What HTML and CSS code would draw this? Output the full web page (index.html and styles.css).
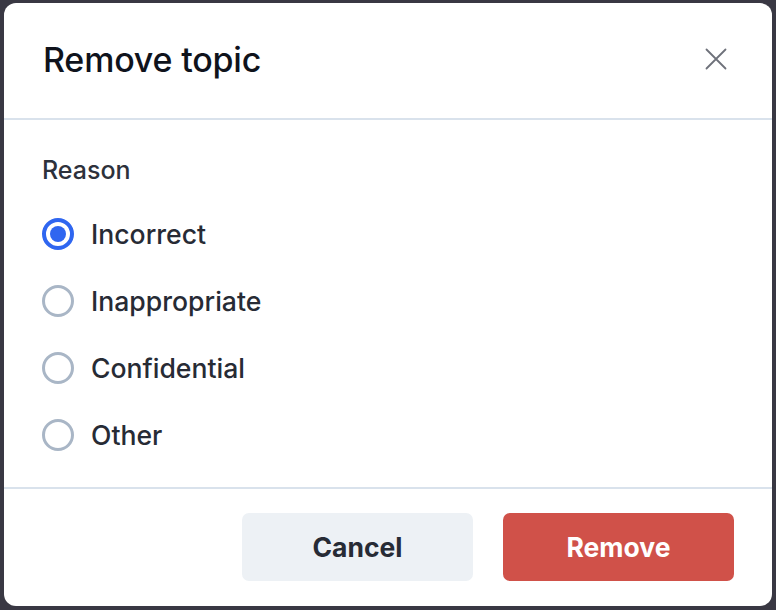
FILE: index.html
```html
<!DOCTYPE html>
<html>
<head>
<meta charset="utf-8">
<link rel="stylesheet" href="styles.css">
</head>
<body>
<div class="dialog">
  <div class="header">
    <h1 class="title">Remove topic</h1>
    <button class="close" aria-label="Close">
      <svg width="22" height="22" viewBox="0 0 22 22"><path d="M1.5 1.5 L20.5 20.5 M20.5 1.5 L1.5 20.5" stroke="#6e717a" stroke-width="1.8" stroke-linecap="round" fill="none"/></svg>
    </button>
  </div>
  <div class="content">
    <div class="label">Reason</div>
    <div class="options">
      <label class="option"><span class="radio checked"></span><span class="opt-text">Incorrect</span></label>
      <label class="option"><span class="radio"></span><span class="opt-text">Inappropriate</span></label>
      <label class="option"><span class="radio"></span><span class="opt-text">Confidential</span></label>
      <label class="option"><span class="radio"></span><span class="opt-text">Other</span></label>
    </div>
  </div>
  <div class="footer">
    <button class="btn btn-cancel">Cancel</button>
    <button class="btn btn-remove">Remove</button>
  </div>
</div>
</body>
</html>
```
FILE: styles.css
```css
* { box-sizing: border-box; }
html, body { margin: 0; padding: 0; }
body {
  background: #393843;
  width: 776px;
  height: 610px;
  padding: 3px 4px 4px 4px;
  font-family: Inter, "Noto Sans", sans-serif;
}
.dialog {
  width: 768px;
  height: 603px;
  background: #ffffff;
  border-radius: 12px;
  display: flex;
  flex-direction: column;
  overflow: hidden;
}
.header {
  height: 117px;
  flex: none;
  display: flex;
  align-items: center;
  justify-content: space-between;
  padding: 0 45px 0 39px;
  border-bottom: 2px solid #d9e2ec;
}
.title {
  margin: 0;
  font-size: 34px;
  font-weight: 500;
  color: #0f131c;
  letter-spacing: -0.2px;
  padding-bottom: 2px;
}
.close {
  background: none;
  border: 0;
  padding: 0;
  width: 22px;
  height: 22px;
  display: flex;
  align-items: center;
  justify-content: center;
  margin-bottom: 4px;
}
.content {
  flex: 1;
  padding: 36px 39px 0 38px;
  border-bottom: 2px solid #d9e2ec;
}
.label {
  font-size: 25px;
  font-weight: 500;
  color: #2d313b;
  line-height: 28px;
  margin-bottom: 33px;
}
.options {
  display: flex;
  flex-direction: column;
  gap: 33px;
}
.option {
  display: flex;
  align-items: center;
  gap: 17px;
  height: 34px;
}
.radio {
  width: 32px;
  height: 32px;
  border-radius: 50%;
  border: 3px solid #a9b6c6;
  display: flex;
  align-items: center;
  justify-content: center;
  flex: none;
}
.radio.checked {
  border: 4px solid #2f66f0;
}
.radio.checked::after {
  content: "";
  width: 16px;
  height: 16px;
  border-radius: 50%;
  background: #2f66f0;
}
.opt-text {
  font-size: 26.6px;
  font-weight: 500;
  color: #272b35;
}
.footer {
  height: 117px;
  flex: none;
  display: flex;
  align-items: flex-start;
  justify-content: flex-end;
  gap: 30px;
  padding: 24px 38px 0 0;
}
.btn {
  width: 231px;
  height: 68px;
  border: 0;
  border-radius: 7px;
  font-family: Inter, "Noto Sans", sans-serif;
  font-size: 26.5px;
  font-weight: 700;
}
.btn-cancel {
  background: #edf1f5;
  color: #272b35;
}
.btn-remove {
  background: #d05149;
  color: #ffffff;
}
```
